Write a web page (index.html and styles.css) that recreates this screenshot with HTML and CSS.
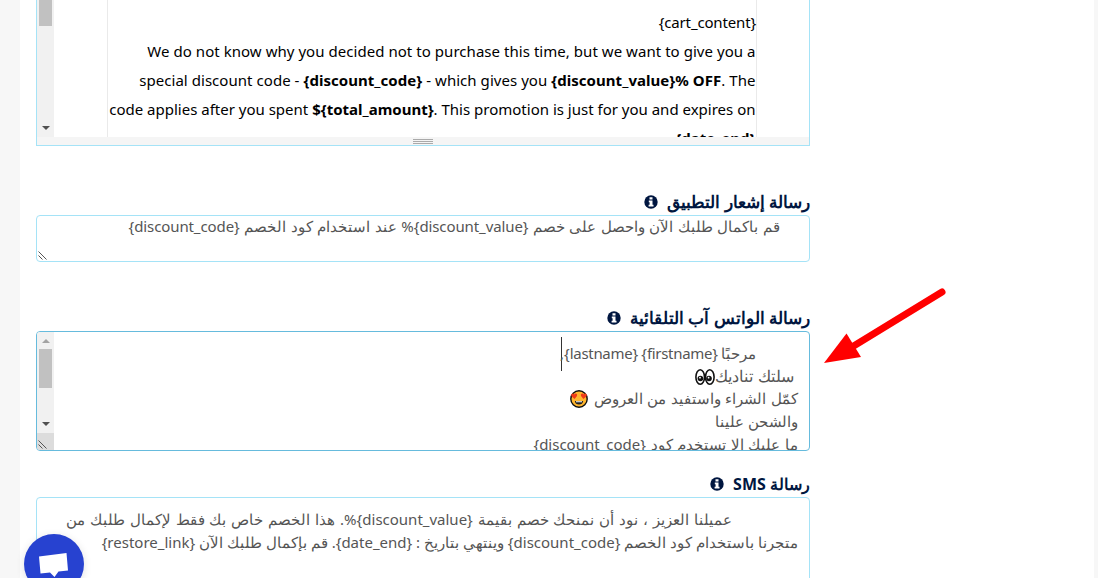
FILE: index.html
```html
<!DOCTYPE html>
<html lang="ar">
<head>
    <meta charset="UTF-8">
    <meta name="viewport" content="width=device-width, initial-scale=1.0">
    <title>Cart reminder messages</title>
    <link rel="stylesheet" href="styles.css">
</head>
<body>
    <svg class="symbols" width="0" height="0">
        <symbol id="info" viewBox="0 0 14 14">
            <circle cx="7" cy="7" r="6.7" fill="#001640"/>
            <path d="M5.500 2.300h3v2.200h-3zM4.800 5.600h3.700v4.200h1v1.700H4.600V9.800h1V7.200h-.8z" fill="#fff"/>
        </symbol>
        <symbol id="grip" viewBox="0 0 9 9">
            <path d="M0.5 0.5l8 8M0.5 4.5l4 4" stroke="#555" stroke-width="1" fill="none"/>
        </symbol>
    </svg>

    <div class="sheet">
        <div class="fields" dir="rtl">
            <div class="editor">
                <div class="editor-view">
                    <div class="mail" dir="ltr">
                        <p class="l1">{cart_content}</p>
                        <p class="l2">We do not know why you decided not to purchase this time, but we want to give you a</p>
                        <p class="l3">special discount code - <b>{discount_code}</b> - which gives you <b>{discount_value}% OFF</b>. The</p>
                        <p class="l4">code applies after you spent <b>${total_amount}</b>. This promotion is just for you and expires on</p>
                        <p class="l5"><b>{date_end}</b></p>
                    </div>
                    <div class="scrollbar editor-scroll">
                        <div class="thumb"></div>
                        <div class="arrow-down"></div>
                    </div>
                </div>
                <div class="resizer"><span></span></div>
            </div>

            <div class="label app-label">رسالة إشعار التطبيق<svg class="info"><use href="#info"/></svg></div>
            <div class="box app-box">
                <p class="line a1">قم باكمال طلبك الآن واحصل على خصم <span class="tag">{discount_value}</span>% عند استخدام كود الخصم <span class="tag">{discount_code}</span></p>
                <svg class="grip"><use href="#grip"/></svg>
            </div>

            <div class="label wa-label">رسالة الواتس آب التلقائية<svg class="info"><use href="#info"/></svg></div>
            <div class="box wa-box">
                <div class="wa-text">
                    <p class="line w1">مرحبًا <span class="tag">{firstname} {lastname}</span>,<i class="caret"></i></p>
                    <p class="line w2"><span class="wide">سلتك تناديك</span><svg class="emoji" viewBox="0 0 20 18">
                        <ellipse cx="5.2" cy="9" rx="4.3" ry="7.3" fill="#fff" stroke="#111" stroke-width="1.6"/>
                        <ellipse cx="14.8" cy="9" rx="4.3" ry="7.3" fill="#fff" stroke="#111" stroke-width="1.6"/>
                        <circle cx="5.4" cy="10.500" r="2.8" fill="#111"/><circle cx="14" cy="10.500" r="2.8" fill="#111"/>
                        <circle cx="5" cy="9.700" r=".9" fill="#fff"/><circle cx="13.600" cy="9.700" r=".9" fill="#fff"/>
                    </svg></p>
                    <p class="line w3">كمّل الشراء واستفيد من العروض <svg class="emoji" viewBox="0 0 20 18">
                        <circle cx="10" cy="9" r="8.2" fill="#ffb52e" stroke="#111" stroke-width="1.4"/>
                        <path d="M5.600 9L2.400 6.200Q1.600 4.200 3.200 3.600q1.400-.2 2 .9.900-1.400 2.300-.7 1.200.9.300 2.500zM14.400 9L17.600 6.200q.8-2-.8-2.600-1.400-.2-2 .9-.9-1.400-2.300-.7-1.200.9-.3 2.500z" fill="#f03a17"/>
                        <path d="M5.800 11h8.400q-.5 3.600-4.200 3.600t-4.200-3.600z" fill="#222"/>
                        <path d="M7 11.200h6v1H7z" fill="#fff"/>
                    </svg></p>
                    <p class="line w4">والشحن علينا</p>
                    <p class="line w5">ما عليك إلا تستخدم كود <span class="tag">{discount_code}</span></p>
                </div>
                <div class="wa-side">
                    <div class="scrollbar">
                        <div class="arrow-up"></div>
                        <div class="thumb"></div>
                        <div class="arrow-down"></div>
                    </div>
                    <div class="corner"></div>
                </div>
                <svg class="grip"><use href="#grip"/></svg>
            </div>

            <div class="label sms-label">رسالة <span class="tag">SMS</span><svg class="info"><use href="#info"/></svg></div>
            <div class="box sms-box">
                <p class="line s1">عميلنا العزيز ، نود أن نمنحك خصم بقيمة <span class="tag">{discount_value}</span>%. هذا الخصم خاص بك فقط لإكمال طلبك من</p>
                <p class="line s2">متجرنا باستخدام كود الخصم <span class="tag">{discount_code}</span> وينتهي بتاريخ : <span class="tag">{date_end}</span>. قم بإكمال طلبك الآن <span class="tag">{restore_link}</span></p>
            </div>
        </div>
    </div>

    <svg class="pointer" viewBox="0 0 124 78">
        <path d="M118 6L28 61" stroke="#f00" stroke-width="7" stroke-linecap="round"/>
        <path d="M0 77L22.500 47.500 37 71z" fill="#f00"/>
    </svg>

    <div class="chat">
        <svg viewBox="0 0 60 60"><path d="M15 22.500L42.500 19 44 36.500 34.500 37.500 30.500 43 26 38.500 16.500 39.500z" fill="#fff"/></svg>
    </div>
</body>
</html>
```

FILE: styles.css
```css
* {
    box-sizing: border-box;
}

body {
    margin: 0;
    height: 578px;
    overflow: hidden;
    background-color: #f7f7f7;
    font-family: "Noto Sans", "Open Sans", sans-serif;
}

p {
    margin: 0;
}

.symbols {
    display: block;
}

.sheet {
    height: 578px;
    margin: 0 4px 0 20px;
    padding-left: 16px;
    background-color: #fff;
    overflow: hidden;
}

.fields {
    width: 774px;
}

/* mail editor */
.editor {
    height: 146px;
    border: 1px solid #a5e3f7;
    border-top: none;
}

.editor-view {
    display: flex;
    height: 137px;
    overflow: hidden;
}

.mail {
    width: 650px;
    margin-right: 52px;
    padding-top: 8px;
    border: solid #eaeaea;
    border-width: 0 1px;
    color: #000;
    font-size: 15px;
    line-height: 29px;
    text-align: right;
    white-space: nowrap;
}

.mail p {
    height: 29px;
    padding-right: 0.5px;
}

.mail .l1 {
    padding-right: 0;
    letter-spacing: -0.15px;
}

.l2,
.l3 {
    letter-spacing: 0.045px;
}

.editor-scroll {
    margin-right: auto;
}

.resizer {
    display: flex;
    justify-content: center;
    align-items: center;
    height: 8px;
    background-color: #f5f5f5;
}

.resizer span {
    width: 20px;
    height: 5px;
    border: solid #aaa;
    border-width: 1px 0;
    background: linear-gradient(#f5f5f5 1px, #aaa 1px, #aaa 2px, #f5f5f5 2px);
}

/* scrollbars */
.scrollbar {
    display: flex;
    flex-direction: column;
    align-items: center;
    width: 17px;
    background-color: #f1f1f1;
}

.thumb {
    width: 13px;
    background-color: #c1c1c1;
}

.editor-scroll .thumb {
    height: 26px;
}

.arrow-up,
.arrow-down {
    border: solid transparent;
    border-width: 0 4px;
}

.arrow-up {
    margin: 7px 0 6px;
    border-bottom: 4px solid #a3a3a3;
}

.arrow-down {
    margin-top: auto;
    margin-bottom: 7px;
    border-top: 4px solid #505050;
}

/* labels */
.label {
    display: flex;
    align-items: center;
    height: 26px;
    color: #001640;
    font-size: 16px;
    font-weight: bold;
    white-space: pre;
}

.info {
    width: 14px;
    height: 14px;
    margin-right: 9px;
}

.app-label {
    margin-top: 43px;
    font-size: 16.8px;
    line-height: 24px;
    padding-bottom: 1px;
}

.wa-label {
    margin-top: 43px;
    font-size: 16.8px;
    line-height: 24px;
    padding-bottom: 1px;
    word-spacing: 0.1px;
}

.sms-label {
    margin-top: 20px;
}

/* message boxes */
.box {
    position: relative;
    border: 1px solid #a5e3f7;
    border-radius: 4px;
    color: #555;
    font-size: 15px;
    overflow: hidden;
}

.line {
    height: 22.6px;
    line-height: 22.6px;
    white-space: nowrap;
}

.grip {
    position: absolute;
    left: 1px;
    bottom: 1px;
    width: 9px;
    height: 9px;
}

.app-box {
    height: 47px;
    padding-right: 29px;
}

.a1 {
    line-height: 21px;
    word-spacing: 0.6px;
}

.a1 .tag {
    letter-spacing: -0.1px;
}

.wa-box {
    display: flex;
    justify-content: space-between;
    height: 120px;
    border-color: #66bbdd;
}

.wa-text {
    padding: 10px 11px 0 0;
}

.wa-text .line {
    height: 22.7px;
    line-height: 22.7px;
}

.w1 {
    padding-right: 42px;
    word-spacing: -0.8px;
}

.w1 .tag {
    letter-spacing: -0.3px;
}

.w2 {
    padding-right: 4px;
}

.wide {
    font-size: 16.2px;
    word-spacing: 1px;
}

.w3,
.w5 {
    word-spacing: 0.7px;
}

.caret {
    display: inline-block;
    width: 1px;
    height: 34px;
    margin: -11px -2px -9px 0;
    background-color: #333;
    vertical-align: middle;
}

.emoji {
    width: 20px;
    height: 18px;
    vertical-align: -4px;
}

.wa-side {
    display: flex;
    flex-direction: column;
    width: 17px;
}

.wa-side .scrollbar {
    height: 101px;
}

.wa-side .thumb {
    height: 39px;
}

.corner {
    flex: 1;
    background-color: #dcdcdc;
}

.sms-box {
    height: 100px;
    padding: 10px 11px 0 0;
}

.s1 {
    padding-right: 66px;
    word-spacing: 1px;
}

/* overlays */
.pointer {
    position: absolute;
    left: 824px;
    top: 286px;
    width: 124px;
    height: 78px;
}

.chat {
    position: absolute;
    left: 24px;
    top: 534px;
    width: 60px;
    height: 60px;
    border-radius: 50%;
    background-color: #2742d0;
    box-shadow: 0 2px 8px rgba(0, 0, 0, 0.12);
}
```
